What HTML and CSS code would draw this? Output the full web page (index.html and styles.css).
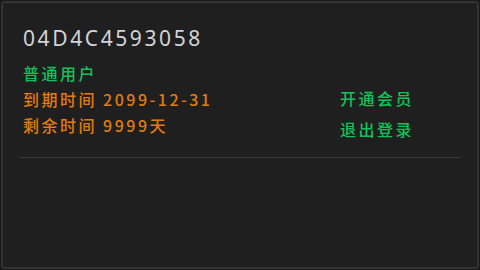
FILE: index.html
```html
<!DOCTYPE html>
<html lang="zh-CN">
<head>
    <meta charset="UTF-8">
    <title>用户信息</title>
    <link rel="stylesheet" href="styles.css">
</head>
<body>
    <section class="card">
        <h2 class="uid">04D4C4593058</h2>
        <div class="info">
            <div class="info-left">
                <div class="level">普通用户</div>
                <div class="expire">到期时间 2099-12-31</div>
                <div class="expire">剩余时间 9999天</div>
            </div>
            <div class="info-right">
                <a class="action" href="#">开通会员</a>
                <a class="action" href="#">退出登录</a>
            </div>
        </div>
        <hr class="divider">
    </section>
</body>
</html>
```

FILE: styles.css
```css
html, body {
    margin: 0;
    background-color: #1a1a1a;
}
body {
    padding: 1px;
    font-family: "Noto Sans CJK SC", "Noto Sans", sans-serif;
}
.card {
    height: 264px;
    border: 2px solid #333333;
    border-radius: 4px;
    background-color: #1f1f1f;
    padding: 0 16px;
}
.uid {
    margin: 24px 0 0 4px;
    font-family: "Noto Sans", "Open Sans", sans-serif;
    font-weight: normal;
    font-size: 21px;
    line-height: 22px;
    letter-spacing: 2.6px;
    color: #d2d4d8;
}
.info {
    display: flex;
    justify-content: space-between;
    margin-top: 11px;
    padding-left: 4px;
}
.info-left div,
.info-right a {
    font-size: 16px;
    font-weight: 500;
    line-height: 26px;
    letter-spacing: 2.5px;
}
.level {
    color: #13c15a;
}
.expire {
    color: #e27c0e;
}
.info-right {
    display: flex;
    flex-direction: column;
    gap: 5px;
    margin: 25px 47px 0 0;
}
.action {
    color: #13c15a;
    text-decoration: none;
}
.divider {
    margin: 15px 0 0;
    border: 0;
    border-top: 1px solid #383838;
}
```
